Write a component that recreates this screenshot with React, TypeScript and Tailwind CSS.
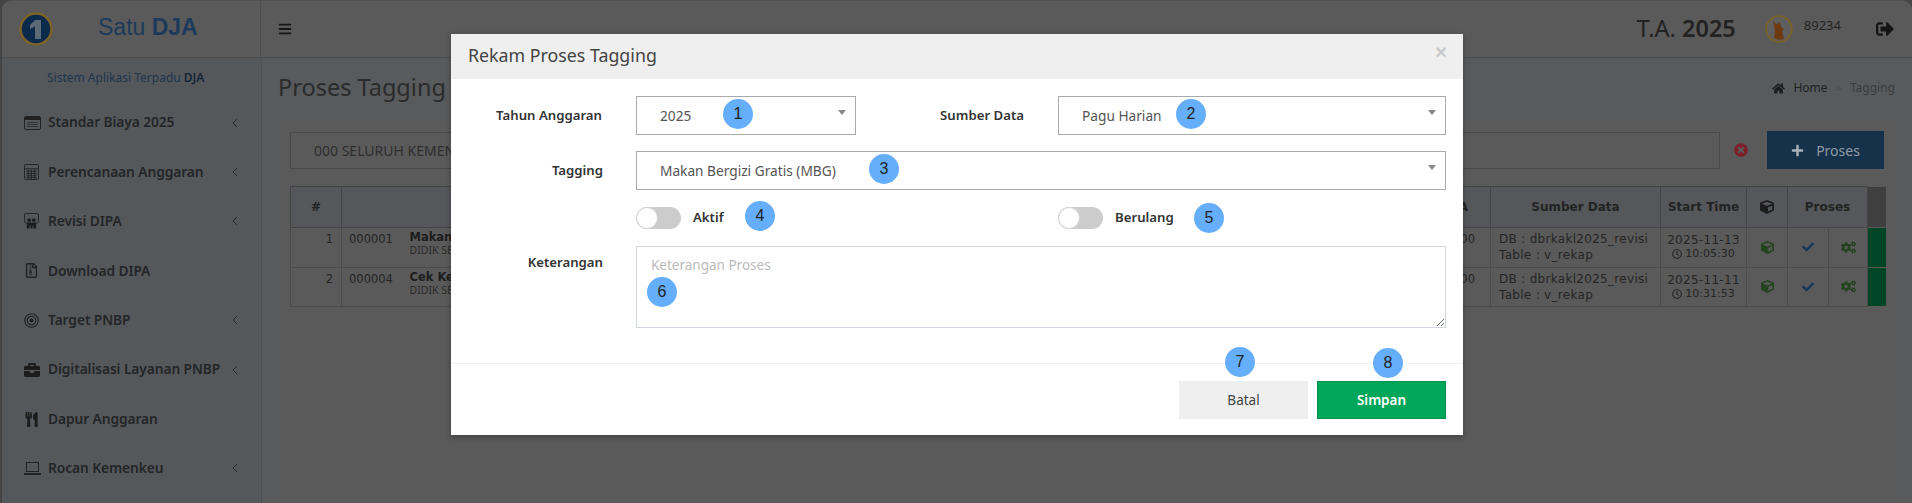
import React from "react";
import {
  FaBriefcase, FaCheck, FaCogs, FaCube, FaHome, FaPlus, FaRegClock,
  FaRegFileArchive, FaSignOutAlt, FaTimesCircle, FaUtensils, FaBars,
} from "react-icons/fa";

const ListIcon = () => (
  <svg viewBox="0 0 17 14" className="w-[17px] h-[14px]" fill="none">
    <rect x="0.5" y="0.5" width="16" height="13" rx="1.5" stroke="#222" />
    <rect x="1" y="1" width="15" height="3" fill="#222" />
    <path d="M3 6.5h11M3 8.5h11M3 10.5h11" stroke="#333" />
  </svg>
);
const CalcIcon = () => (
  <svg viewBox="0 0 16 17" className="w-[15px] h-[16px]" fill="none">
    <rect x="0.5" y="0.5" width="15" height="16" rx="1.5" stroke="#222" />
    <path d="M1 5h14M2.5 7.5h11M2.5 10h11M2.5 12.5h11M2.5 14.5h11M4.5 6v10M8 6v10M11.5 6v10" stroke="#222" />
  </svg>
);
const RevisiIcon = () => (
  <svg viewBox="0 0 16 17" className="w-[15px] h-[16px]" fill="none">
    <path d="M3 10.500H2A1.500 1.500 0 0 1 .5 9V2A1.500 1.500 0 0 1 2 .5h12A1.500 1.500 0 0 1 15.500 2v7a1.500 1.500 0 0 1-1.500 1.500h-1" stroke="#222" />
    <circle cx="5.500" cy="7.500" r="2" fill="#1c1c1c" />
    <circle cx="10.500" cy="7.500" r="2" fill="#1c1c1c" />
    <path d="M3 10h10v6.500h-3v-3H9v3H7v-3H6v3H3z" fill="#1c1c1c" />
  </svg>
);
const TargetIcon = () => (
  <svg viewBox="0 0 16 16" className="w-[15px] h-[15px]" fill="none">
    <circle cx="8" cy="8" r="7.200" stroke="#222" strokeWidth="1.200" />
    <circle cx="8" cy="8" r="4.600" stroke="#222" strokeWidth="1.200" />
    <circle cx="8" cy="8" r="2.200" fill="#222" />
  </svg>
);
const LaptopIcon = () => (
  <svg viewBox="0 0 17 13" className="w-[17px] h-[13px]" fill="none">
    <rect x="2.500" y="0.500" width="12" height="9" stroke="#222" />
    <rect x="0" y="11" width="17" height="2" rx="0.500" fill="#222" />
  </svg>
);
const Chevron = () => (
  <svg viewBox="0 0 6 10" className="ml-auto w-[6px] h-[10px]" fill="none">
    <path d="M5 1 1 5l4 4" stroke="#2a2a2a" strokeWidth="1" />
  </svg>
);

const Logo = () => (
  <svg viewBox="0 0 34 34" className="w-[34px] h-[34px]">
    <circle cx="17" cy="17" r="15.500" fill="#0b2a4c" stroke="#7e6327" strokeWidth="2.500" />
    <path d="M16 8h6v19h-6V14.500l-5 2.500v-4z" fill="#5c6a78" />
  </svg>
);
const Fox = () => (
  <svg viewBox="0 0 28 28" className="w-[28px] h-[28px]">
    <circle cx="14" cy="14" r="12.800" fill="#5f5f5f" stroke="#7c6126" strokeWidth="1.800" />
    <path d="M8 6l3.500 3.500L15 7l1 5 3 2-2 2 2 8q-6 2-10-1 2-7-1-17z" fill="#6e3a10" />
  </svg>
);

const menu: { icon: React.ReactNode; label: string; chevron: boolean }[] = [
  { icon: <ListIcon />, label: "Standar Biaya 2025", chevron: true },
  { icon: <CalcIcon />, label: "Perencanaan Anggaran", chevron: true },
  { icon: <RevisiIcon />, label: "Revisi DIPA", chevron: true },
  { icon: <FaRegFileArchive className="text-[15px] text-[#222]" />, label: "Download DIPA", chevron: false },
  { icon: <TargetIcon />, label: "Target PNBP", chevron: true },
  { icon: <FaBriefcase className="text-[16px] text-[#1c1c1c]" />, label: "Digitalisasi Layanan PNBP", chevron: true },
  { icon: <FaUtensils className="text-[15px] text-[#1c1c1c]" />, label: "Dapur Anggaran", chevron: false },
  { icon: <LaptopIcon />, label: "Rocan Kemenkeu", chevron: true },
];

const rows = [
  { no: 1, code: "000001", name: "Makan Bergizi Gratis", date: "2025-11-13", time: "10:05:30" },
  { no: 2, code: "000004", name: "Cek Kesehatan Gratis", date: "2025-11-11", time: "10:31:53" },
];

const Badge = ({ n, className }: { n: number; className: string }) => (
  <span className={`absolute w-[30px] h-[30px] -ml-[15px] -mt-[15px] rounded-full bg-[#64aefc] flex items-center justify-center text-[16px] text-[#222] font-['Liberation_Sans',sans-serif] ${className}`}>
    {n}
  </span>
);

const SelectBox = ({ text, className }: { text: string; className: string }) => (
  <div className={`relative h-[39px] border border-[#aaaaaa] flex items-center pl-[23px] pt-[2px] text-[13.700px] text-[#555] ${className}`}>
    {text}
    <span className="absolute right-[9px] top-[13px] w-0 h-0 border-x-[4px] border-x-transparent border-t-[5px] border-t-[#888]" />
  </div>
);

const Toggle = () => (
  <span className="relative block w-[45px] h-[22px] rounded-full bg-[#cccccc]">
    <span className="absolute left-0 top-0 w-[22px] h-[22px] rounded-full bg-white border border-[#d4d4d4]" />
  </span>
);

const th = "border border-[#454545] text-center font-bold text-[12px] text-[#232323] bg-[#55575a]";
const td = "border border-[#4c4c4c] text-[#252525]";

export default function App() {
  return (
    <div className="relative w-[1912px] h-[503px] overflow-hidden bg-[#454545] pl-[2px] font-['Noto_Sans',sans-serif]">
      <div className="flex flex-col h-full rounded-t-[10px] overflow-hidden bg-[#585a5c] border-t border-[#505050]">
        <header className="flex h-[57px] shrink-0 bg-[#5a5a5a] border-b border-[#4d4d4d]">
          <div className="w-[259px] shrink-0 flex items-center border-r border-[#4f4f4f] pl-[17px]">
            <Logo />
            <div className="ml-[45px] -mt-[3px] text-[23px] text-[#1d3a5c] font-['Liberation_Sans',sans-serif]">
              Satu <b>DJA</b>
            </div>
          </div>
          <div className="flex-1 flex items-center pl-[17px] pr-[18px]">
            <FaBars className="text-[14px] text-[#161616]" />
            <div className="ml-auto text-[23.500px] text-[#222] leading-none">
              T.A. <b className="font-semibold">2025</b>
            </div>
            <div className="ml-[29px]"><Fox /></div>
            <div className="ml-[11px] -mt-[7px] text-[13px] text-[#252525]">89234</div>
            <FaSignOutAlt className="ml-[35px] text-[18px] text-[#141414]" />
          </div>
        </header>

        <div className="flex flex-1 min-h-0">
          <aside className="w-[259px] shrink-0 bg-[#55585b] border-r border-[#4e4f50] box-content">
            <div className="h-[40px] flex items-center pl-[45px] text-[12px] text-[#1d3550]">
              <span>Sistem Aplikasi Terpadu <b className="font-semibold text-[#12253a]">DJA</b></span>
            </div>
            <nav>
              {menu.map((m) => (
                <div key={m.label} className="h-[49.400px] flex items-center pl-[22px] pr-[23px] text-[13.800px] font-semibold text-[#232528]">
                  <span className="w-[26px] -mr-[2px] flex items-center">{m.icon}</span>
                  <span className="tracking-[-0.1px]">{m.label}</span>
                  {m.chevron && <Chevron />}
                </div>
              ))}
            </nav>
          </aside>

          <main className="flex-1 min-w-0 pl-[16px] pr-[17px]">
            <div className="h-[62px] flex items-center justify-between">
              <h1 className="text-[23.500px] font-normal text-[#2b2b2b] -mt-[2px]">Proses Tagging</h1>
              <div className="flex items-center text-[12px] -mt-[2px]">
                <FaHome className="text-[13px] text-[#1c1c1c] mr-[8px]" />
                <span className="text-[#222]">Home</span>
                <span className="mx-[8px] text-[#4a4a4a] text-[11px]">&gt;</span>
                <span className="text-[#3c3c3c]">Tagging</span>
              </div>
            </div>

            <section className="bg-[#5a5a5a] h-[400px] pl-[12px] pr-[11px] pt-[11px]">
              <div className="flex items-center h-[38px]">
                <div className="w-[1431px] h-[37px] border border-[#4a4a4a] flex items-center pl-[23px] text-[14px] text-[#2e2e2e]">
                  000 SELURUH KEMENTERIAN
                </div>
                <FaTimesCircle className="ml-[14px] text-[14px] text-[#7c1f28]" />
                <button className="ml-[19px] w-[117px] h-[38px] bg-[#16324a] flex items-center justify-center gap-[12px] text-[14px] text-[#8f9aa6]">
                  <FaPlus className="text-[13px] text-[#aab2ba]" />
                  Proses
                </button>
              </div>

              <table className="mt-[17px] w-[1595px] table-fixed border-collapse font-['DejaVu_Sans',sans-serif]">
                <colgroup>
                  <col className="w-[51px]" />
                  <col className="w-[69px]" />
                  <col className="w-[960px]" />
                  <col className="w-[120px]" />
                  <col className="w-[170px]" />
                  <col className="w-[86px]" />
                  <col className="w-[41px]" />
                  <col className="w-[41px]" />
                  <col className="w-[39px]" />
                  <col className="w-[18px]" />
                </colgroup>
                <thead>
                  <tr className="h-[41px]">
                    <th className={th}>#</th>
                    <th className={th} colSpan={2}>Nama Proses</th>
                    <th className={`${th} !text-right pr-[22px]`}>PAGU DIPA</th>
                    <th className={th}>Sumber Data</th>
                    <th className={th}>Start Time</th>
                    <th className={th}><FaCube className="mx-auto text-[14px] text-[#1c1c1c]" /></th>
                    <th className={th} colSpan={2}>Proses</th>
                    <th className="bg-[#3f3f3f]" />
                  </tr>
                </thead>
                <tbody>
                  {rows.map((r) => (
                    <tr key={r.no} className="h-[39.500px] text-[11.500px]">
                      <td className={`${td} text-right pr-[8px] align-top pt-[3px]`}>{r.no}</td>
                      <td className="border-y border-[#4c4c4c] text-[#252525] align-top pt-[3px] pl-[7px]">{r.code}</td>
                      <td className="border-y border-r border-[#4c4c4c] text-[#1d1d1d] align-top pt-[2px] leading-[14px]">
                        <b className="-ml-[1px]">{r.name}</b>
                        <div className="-ml-[1px] text-[10.500px] font-['Noto_Sans',sans-serif] text-[#2a2a2a] leading-[13px]">DIDIK SETIAWAN</div>
                      </td>
                      <td className={`${td} text-right pr-[15px] align-top pt-[3px]`}>1.000.000</td>
                      <td className={`${td} pl-[8px] leading-[16px] text-[12px] tracking-[0.3px]`}>
                        <div>DB : dbrkakl2025_revisi</div>
                        <div>Table : v_rekap</div>
                      </td>
                      <td className={`${td} text-center leading-[14px]`}>
                        <div className="text-[12px] tracking-[0.3px]">{r.date}</div>
                        <div className="flex items-center justify-center gap-[3px] text-[11px]"><FaRegClock className="text-[10px]" />{r.time}</div>
                      </td>
                      <td className={td}><FaCube className="mx-auto text-[13px] text-[#24431f]" /></td>
                      <td className={td}><FaCheck className="mx-auto text-[12px] text-[#17385a]" /></td>
                      <td className={td}><FaCogs className="mx-auto text-[15px] text-[#24431f]" /></td>
                      <td className="border-y border-[#5a5a5a] bg-[#004526]" />
                    </tr>
                  ))}
                </tbody>
              </table>
            </section>
          </main>
        </div>
      </div>

      {/* Modal */}
      <div className="absolute left-[451px] top-[34px] w-[1012px] h-[401px] bg-white flex flex-col shadow-[0_2px_6px_rgba(0,0,0,0.3)]">
        <div className="h-[45px] shrink-0 bg-[#efefef] flex items-center justify-between pl-[17px] pr-[16px]">
          <span className="text-[17.800px] -mt-[2px] text-[#444]">Rekam Proses Tagging</span>
          <span className="text-[20px] leading-none font-bold text-[#c9c9c9] -mt-[10px] font-['Liberation_Sans',sans-serif]">×</span>
        </div>

        <div className="flex-1 pt-[17px] pr-[17px] flex flex-col text-[13.200px]">
          <div className="flex items-center">
            <label className="w-[151px] text-right font-semibold text-[#333]">Tahun Anggaran</label>
            <SelectBox text="2025" className="ml-[34px] w-[220px]" />
            <label className="w-[168px] text-right font-semibold text-[#333]">Sumber Data</label>
            <SelectBox text="Pagu Harian" className="ml-[34px] w-[388px]" />
          </div>
          <div className="flex items-center mt-[16px]">
            <label className="w-[152px] -mr-[1px] text-right font-semibold text-[#333]">Tagging</label>
            <SelectBox text="Makan Bergizi Gratis (MBG)" className="ml-[34px] w-[810px]" />
          </div>
          <div className="flex items-center mt-[17px] h-[22px] pl-[185px]">
            <div className="w-[422px] flex items-center">
              <Toggle />
              <span className="ml-[12px] font-semibold text-[#333]">Aktif</span>
            </div>
            <Toggle />
            <span className="ml-[12px] font-semibold text-[#333]">Berulang</span>
          </div>
          <div className="flex items-start mt-[17px]">
            <label className="w-[152px] -mr-[1px] text-right font-semibold text-[#333] mt-[7px]">Keterangan</label>
            <textarea
              placeholder="Keterangan Proses"
              className="ml-[34px] w-[810px] h-[82px] border border-[#d2d6de] px-[14px] py-[8px] text-[13.500px] outline-none placeholder:text-[#bbbbbb]"
            />
          </div>
        </div>

        <div className="h-[72px] shrink-0 border-t border-[#f1f1f1] flex items-start justify-end gap-[9px] pr-[17px] pt-[17px]">
          <button className="w-[129px] h-[38px] bg-[#efefef] text-[13.500px] text-[#444]">Batal</button>
          <button className="w-[129px] h-[38px] bg-[#00a65a] border border-[#008d4c] text-[13.500px] font-semibold text-white">Simpan</button>
        </div>

        <Badge n={1} className="left-[287px] top-[80px]" />
        <Badge n={2} className="left-[740px] top-[80px]" />
        <Badge n={3} className="left-[433px] top-[135px]" />
        <Badge n={4} className="left-[309px] top-[182px]" />
        <Badge n={5} className="left-[758px] top-[184px]" />
        <Badge n={6} className="left-[211px] top-[258px]" />
        <Badge n={7} className="left-[789px] top-[328px]" />
        <Badge n={8} className="left-[937px] top-[329px]" />
      </div>
    </div>
  );
}
